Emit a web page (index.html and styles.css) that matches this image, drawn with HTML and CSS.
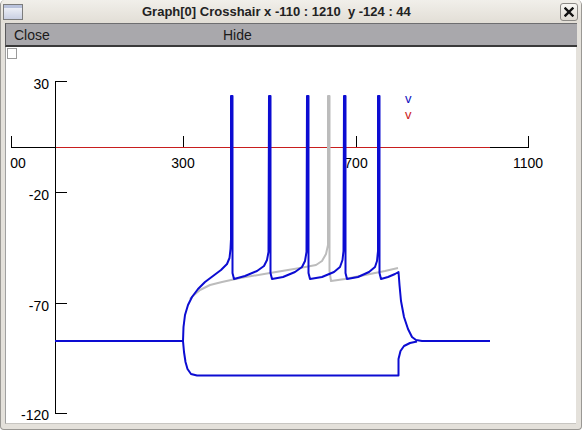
FILE: index.html
```html
<!DOCTYPE html>
<html>
<head>
<meta charset="utf-8">
<link rel="stylesheet" href="styles.css">
</head>
<body>
<div class="window">
  <div class="titlebar">
    <span class="ticon"><span class="ticon-bar"></span></span>
    <span class="title">Graph[0] Crosshair x -110 : 1210&nbsp; y -124 : 44</span>
    <span class="tclose">
      <svg width="10" height="10" viewBox="0 0 10 10"><path d="M1.5 1.5 L8.5 8.5 M8.5 1.5 L1.5 8.5" stroke="#111" stroke-width="2.4" stroke-linecap="square"/></svg>
    </span>
  </div>
  <div class="menubar">
    <span class="mi">Close</span>
    <span class="mi">Hide</span>
  </div>
  <div class="canvas">
    <svg class="plot" width="570" height="376" viewBox="6 48 570 376">
      <rect x="7.5" y="49.5" width="9" height="10" fill="#fff" stroke="#9a9a9a"/>
      <!-- y axis -->
      <g stroke="#000" stroke-width="1" shape-rendering="crispEdges">
        <line x1="55.5" y1="82" x2="55.5" y2="415"/>
        <line x1="55" y1="82.5" x2="67" y2="82.5"/>
        <line x1="55" y1="193.5" x2="67" y2="193.5"/>
        <line x1="55" y1="304.5" x2="67" y2="304.5"/>
        <line x1="55" y1="414.5" x2="67" y2="414.5"/>
        <!-- x axis -->
        <line x1="11" y1="148.5" x2="529" y2="148.5"/>
        <line x1="11.5" y1="137" x2="11.5" y2="148"/>
        <line x1="183.5" y1="137" x2="183.5" y2="148"/>
        <line x1="356.5" y1="137" x2="356.5" y2="148"/>
        <line x1="528.5" y1="137" x2="528.5" y2="148"/>
      </g>
      <g class="lbl" text-anchor="end">
        <text x="49" y="90">30</text>
        <text x="49" y="201">-20</text>
        <text x="49" y="312">-70</text>
        <text x="49" y="421">-120</text>
      </g>
      <g class="lbl" text-anchor="middle">
        <text x="18" y="169">00</text>
        <text x="183" y="169">300</text>
        <text x="356" y="169">700</text>
        <text x="528" y="169">1100</text>
      </g>
      <line x1="56" y1="148.5" x2="490" y2="148.5" stroke="#c81e1e" stroke-width="1.2"/>
      <text class="leg" x="405" y="104" fill="#1010c0">v</text>
      <text class="leg" x="405" y="120" fill="#cc1a1a">v</text>
      <!-- gray trace -->
      <polyline fill="none" stroke="#bcbcbc" stroke-width="2" stroke-linejoin="round"
        points="190,300 194,296 200,291 210,286 222,283 240,279 270,274 300,269 316,266 322,262 326,255 328,246 328,97 329.5,97 329.5,272 331,282 345,280 365,276 385,272 398,269"/>
      <!-- blue traces -->
      <g fill="none" stroke="#0c0cd2" stroke-width="2" stroke-linejoin="round">
        <polyline points="55,342 183,342"/>
        <polyline points="183,342 183.5,328 185,316 188,306 192,298 198,290 205,283 213,277 221,271 227,265 229.5,259 230.5,250 231,240 231,97 232.5,97 232.5,274 234,280 245,277 257,272 264,267 267,261 268.5,253 269,97 270.5,97 270.5,274 272,280 283,278 295,273 302,268 305,262 306.5,253 307,97 308.5,97 308.5,274 310,280 322,278 334,273 340,268 342.5,261 343.5,252 344,97 345.5,97 345.5,274 347,280 358,278 369,273 375,268 377,262 378,252 378,97 379.5,97 379.5,274 381,280 388,278 395,275 398.5,273 399.5,286 401,302 404,318 408,330 412,338 416,341 422,342 490,342"/>
        <polyline points="183,342 184,353 185.5,363 187.5,370 191,375 197,376.5 398.5,376.5 398.5,360 400.5,352 404,347 410,344 417,342.5"/>
      </g>
    </svg>
  </div>
</div>
</body>
</html>
```

FILE: styles.css
```css
html, body {
  margin: 0;
  padding: 0;
  background: #ffffff;
}
body {
  width: 582px;
  height: 430px;
  overflow: hidden;
}
.window {
  width: 582px;
  height: 430px;
  box-sizing: border-box;
  background: #e4e1db;
  border: 1px solid #9a9894;
  border-top: none;
  border-radius: 5px 5px 4px 4px;
  display: flex;
  flex-direction: column;
  overflow: hidden;
}
.titlebar {
  height: 23px;
  flex: none;
  display: flex;
  align-items: center;
  background: linear-gradient(#f1efea, #e2ded6);
  font-family: "Liberation Sans", Arial, sans-serif;
}
.ticon {
  margin-left: 2px;
  width: 20px;
  height: 16px;
  box-sizing: border-box;
  border: 1px solid #7c7c7c;
  background: linear-gradient(#f6f7fb, #c9cfe2);
  display: flex;
  flex-direction: column;
}
.ticon-bar {
  height: 3px;
  background: #b9c2dc;
}
.title {
  margin-left: 119px;
  font-weight: bold;
  font-size: 13px;
  color: #222;
  white-space: pre;
}
.tclose {
  margin-left: auto;
  margin-right: 3px;
  width: 18px;
  height: 18px;
  box-sizing: border-box;
  border: 1px solid #8c8a86;
  border-radius: 3px;
  background: linear-gradient(#f8f7f4, #dedad2);
  display: flex;
  align-items: center;
  justify-content: center;
}
.menubar {
  flex: none;
  margin: 0 4px 0 4px;
  height: 24px;
  box-sizing: border-box;
  background: #a9a8ac;
  border-top: 1px solid #6e6e70;
  border-left: 1px solid #5a5a5c;
  border-bottom: 2px solid #3a3a3a;
  display: grid;
  grid-template-columns: 209px auto;
  align-items: center;
  padding-left: 8px;
  font-family: "Liberation Sans", Arial, sans-serif;
  font-size: 14px;
  color: #1a1a1a;
}
.canvas {
  flex: none;
  margin: 0 5px 0 4px;
  height: 376px;
  background: #ffffff;
  border-left: 1px solid #a0a0a0;
  border-bottom: 1px solid #c8c6c2;
  overflow: hidden;
}
.plot {
  display: block;
}
.lbl text {
  font-family: "Liberation Sans", Arial, sans-serif;
  font-size: 14px;
  fill: #000;
}
.leg {
  font-family: "Liberation Sans", Arial, sans-serif;
  font-size: 13px;
}
```
